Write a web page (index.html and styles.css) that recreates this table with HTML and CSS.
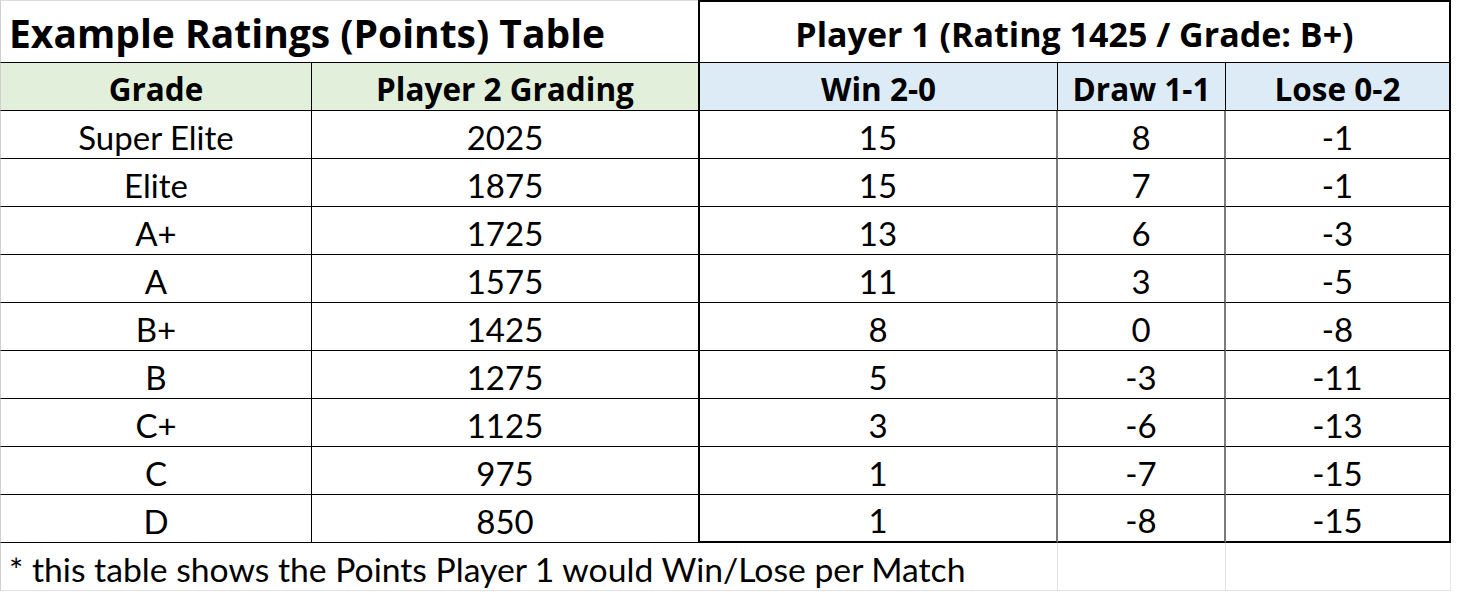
FILE: index.html
```html
<!DOCTYPE html>
<html lang="en">
<head>
<meta charset="utf-8">
<title>Example Ratings (Points) Table</title>
<link rel="stylesheet" href="styles.css">
</head>
<body>
<div class="sheet">
  <div class="cell title span2 gl-left gl-top">Example Ratings (Points) Table</div>
  <div class="cell ptitle span3 blk-l blk-r blk-t">Player 1 (Rating 1425 / Grade: B+)</div>

  <div class="cell hd green gl-left vr">Grade</div>
  <div class="cell hd green">Player 2 Grading</div>
  <div class="cell hd blue blk-l vr">Win 2-0</div>
  <div class="cell hd blue vr">Draw 1-1</div>
  <div class="cell hd blue blk-r">Lose 0-2</div>

  <div class="cell gl-left vr">Super Elite</div><div class="cell">2025</div><div class="cell blk-l vg">15</div><div class="cell vg">8</div><div class="cell blk-r">-1</div>
  <div class="cell gl-left vr">Elite</div><div class="cell">1875</div><div class="cell blk-l vg">15</div><div class="cell vg">7</div><div class="cell blk-r">-1</div>
  <div class="cell gl-left vr">A+</div><div class="cell">1725</div><div class="cell blk-l vg">13</div><div class="cell vg">6</div><div class="cell blk-r">-3</div>
  <div class="cell gl-left vr">A</div><div class="cell">1575</div><div class="cell blk-l vg">11</div><div class="cell vg">3</div><div class="cell blk-r">-5</div>
  <div class="cell gl-left vr">B+</div><div class="cell">1425</div><div class="cell blk-l vg">8</div><div class="cell vg">0</div><div class="cell blk-r">-8</div>
  <div class="cell gl-left vr">B</div><div class="cell">1275</div><div class="cell blk-l vg">5</div><div class="cell vg">-3</div><div class="cell blk-r">-11</div>
  <div class="cell gl-left vr">C+</div><div class="cell">1125</div><div class="cell blk-l vg">3</div><div class="cell vg">-6</div><div class="cell blk-r">-13</div>
  <div class="cell gl-left vr">C</div><div class="cell">975</div><div class="cell blk-l vg">1</div><div class="cell vg">-7</div><div class="cell blk-r">-15</div>
  <div class="cell gl-left vr last">D</div><div class="cell last">850</div><div class="cell blk-l vg last">1</div><div class="cell vg last">-8</div><div class="cell blk-r last">-15</div>

  <div class="cell note span3 gl-left">* this table shows the Points Player 1 would Win/Lose per Match</div>
  <div class="cell foot"></div>
  <div class="cell foot"></div>
</div>
</body>
</html>
```

FILE: styles.css
```css
* { box-sizing: border-box; }
html, body { margin: 0; padding: 0; background: #fff; }
body { font-family: "Lato", "Liberation Sans", sans-serif; color: #000; }

.sheet {
  display: grid;
  grid-template-columns: 312px 386px 360px 168px 225px;
  grid-template-rows: 63px 48px repeat(9, 48px) 48px;
  width: 1451px;
}

.cell {
  display: flex;
  align-items: center;
  justify-content: center;
  border-bottom: 1px solid #000;
  font-size: 33px;
  padding-top: 4px;
  white-space: nowrap;
  overflow: visible;
}

.span2 { grid-column: span 2; }
.span3 { grid-column: span 3; }

.title, .ptitle, .hd {
  font-family: "Open Sans", "Lato", sans-serif;
  font-weight: 700;
}
.title {
  justify-content: flex-start;
  padding-left: 8px;
  padding-top: 2px;
  font-size: 39px;
}
.ptitle { font-size: 34px; }
.hd { font-size: 31.5px; }
.green { background: #e2efda; }
.blue { background: #ddebf7; }

.gl-left { border-left: 1px solid #cfcfcf; }
.gl-top { border-top: 1px solid #dcdcdc; }
.vr { border-right: 1px solid #000; }
.vg { border-right: 2px solid #7a7a7a; }

.blk-l { border-left: 2px solid #000; }
.blk-r { border-right: 2px solid #000; }
.blk-t { border-top: 2px solid #000; }
.last.blk-l, .last.blk-r, .last.vg { border-bottom: 2px solid #000; }

.note {
  justify-content: flex-start;
  padding-left: 8px;
  font-size: 33.7px;
  border-bottom: 1px solid #e3e3e3;
  border-right: 1px solid #e3e3e3;
}
.foot {
  border-bottom: 1px solid #e3e3e3;
  border-right: 1px solid #e3e3e3;
}
```
